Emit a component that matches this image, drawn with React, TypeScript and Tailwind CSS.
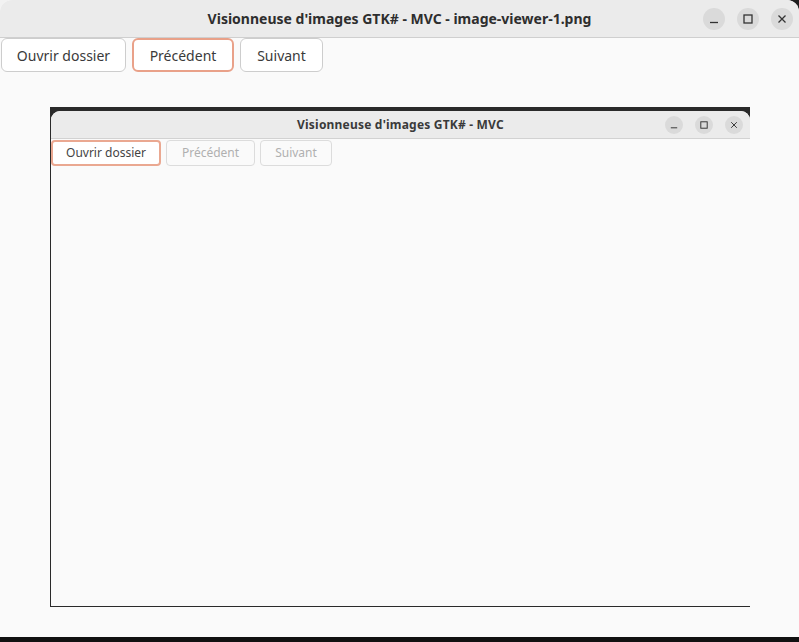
import React from 'react';

const font = { fontFamily: '"Noto Sans", "Open Sans", sans-serif' };

const WinButtons: React.FC<{ small?: boolean }> = ({ small }) => {
  const s = small ? 'w-[18px] h-[18px]' : 'w-[22px] h-[22px]';
  const icon = small ? 8 : 10;
  const sw = small ? 1.2 : 1.3;
  return (
    <div className={`flex items-center gap-[12px] ${small ? 'pr-[7px]' : 'pr-[6px]'}`}>
      <div className={`${s} rounded-full bg-[#dadada] flex items-center justify-center`}>
        <svg width={icon} height={icon} viewBox="0 0 10 10">
          <path d="M1 8.5h8" stroke="#333" strokeWidth={sw} />
        </svg>
      </div>
      <div className={`${s} rounded-full bg-[#dadada] flex items-center justify-center`}>
        <svg width={icon} height={icon} viewBox="0 0 10 10">
          <rect x="1" y="1" width="8" height="8" fill="none" stroke="#333" strokeWidth={sw} />
        </svg>
      </div>
      <div className={`${s} rounded-full bg-[#dadada] flex items-center justify-center`}>
        <svg width={icon} height={icon} viewBox="0 0 10 10">
          <path d="M1.5 1.5l7 7M8.5 1.5l-7 7" stroke="#333" strokeWidth={sw} />
        </svg>
      </div>
    </div>
  );
};

export default function App() {
  return (
    <div className="w-[799px] h-[642px] overflow-hidden flex flex-col bg-[linear-gradient(to_right,#f2f2f2_62%,#1e1e1e_62%)]" style={font}>
      <div className="flex-1 flex flex-col bg-[#fafafa] rounded-t-[12px] overflow-hidden">
        {/* title bar */}
        <div className="h-[38px] shrink-0 grid grid-cols-[1fr_auto_1fr] items-center bg-[#ebebeb] border-b border-[#cfcfcf]">
          <div />
          <div className="text-[14px] font-bold text-[#2e2e2e]">
            Visionneuse d'images GTK# - MVC - image-viewer-1.png
          </div>
          <div className="flex justify-end">
            <WinButtons />
          </div>
        </div>

        {/* toolbar */}
        <div className="flex items-center gap-[6px] pl-[1px] h-[34px] shrink-0">
          <button className="h-[34px] w-[125px] rounded-[6px] border border-[#cdcdcd] bg-white text-[14px] text-[#3a3a3a]">
            Ouvrir dossier
          </button>
          <button className="h-[34px] w-[102px] rounded-[6px] border-2 border-[#e9a189] bg-white text-[14px] text-[#3a3a3a]">
            Précédent
          </button>
          <button className="h-[34px] w-[83px] rounded-[6px] border border-[#cdcdcd] bg-white text-[14px] text-[#3a3a3a]">
            Suivant
          </button>
        </div>

        {/* image area */}
        <div className="flex-1 flex flex-col">
          <div className="ml-[50px] mt-[35px] w-[700px] h-[500px] bg-[#2a2a2a] pt-[4px] pl-[1px] pb-[1px] flex flex-col">
            <div className="flex-1 bg-[#fafafa] rounded-t-[9px] overflow-hidden flex flex-col">
              <div className="h-[28px] shrink-0 grid grid-cols-[1fr_auto_1fr] items-center bg-[#ebebeb] border-b border-[#d2d2d2]">
                <div />
                <div className="text-[12px] font-bold text-[#3a3a3a] tracking-[0.2px]">Visionneuse d'images GTK# - MVC</div>
                <div className="flex justify-end">
                  <WinButtons small />
                </div>
              </div>
              <div className="flex items-center gap-[5px] pt-[1px]">
                <button className="h-[26px] w-[110px] rounded-[4px] border-2 border-[#eaa891] bg-white text-[12px] text-[#444]">
                  Ouvrir dossier
                </button>
                <button className="h-[26px] w-[89px] rounded-[4px] border border-[#dcdcdc] bg-[#fafafa] text-[12px] text-[#b0b0b0]">
                  Précédent
                </button>
                <button className="h-[26px] w-[72px] rounded-[4px] border border-[#dcdcdc] bg-[#fafafa] text-[12px] text-[#b0b0b0]">
                  Suivant
                </button>
              </div>
            </div>
          </div>
        </div>
        <div className="h-[5px] shrink-0 bg-[#111]" />
      </div>
    </div>
  );
}
